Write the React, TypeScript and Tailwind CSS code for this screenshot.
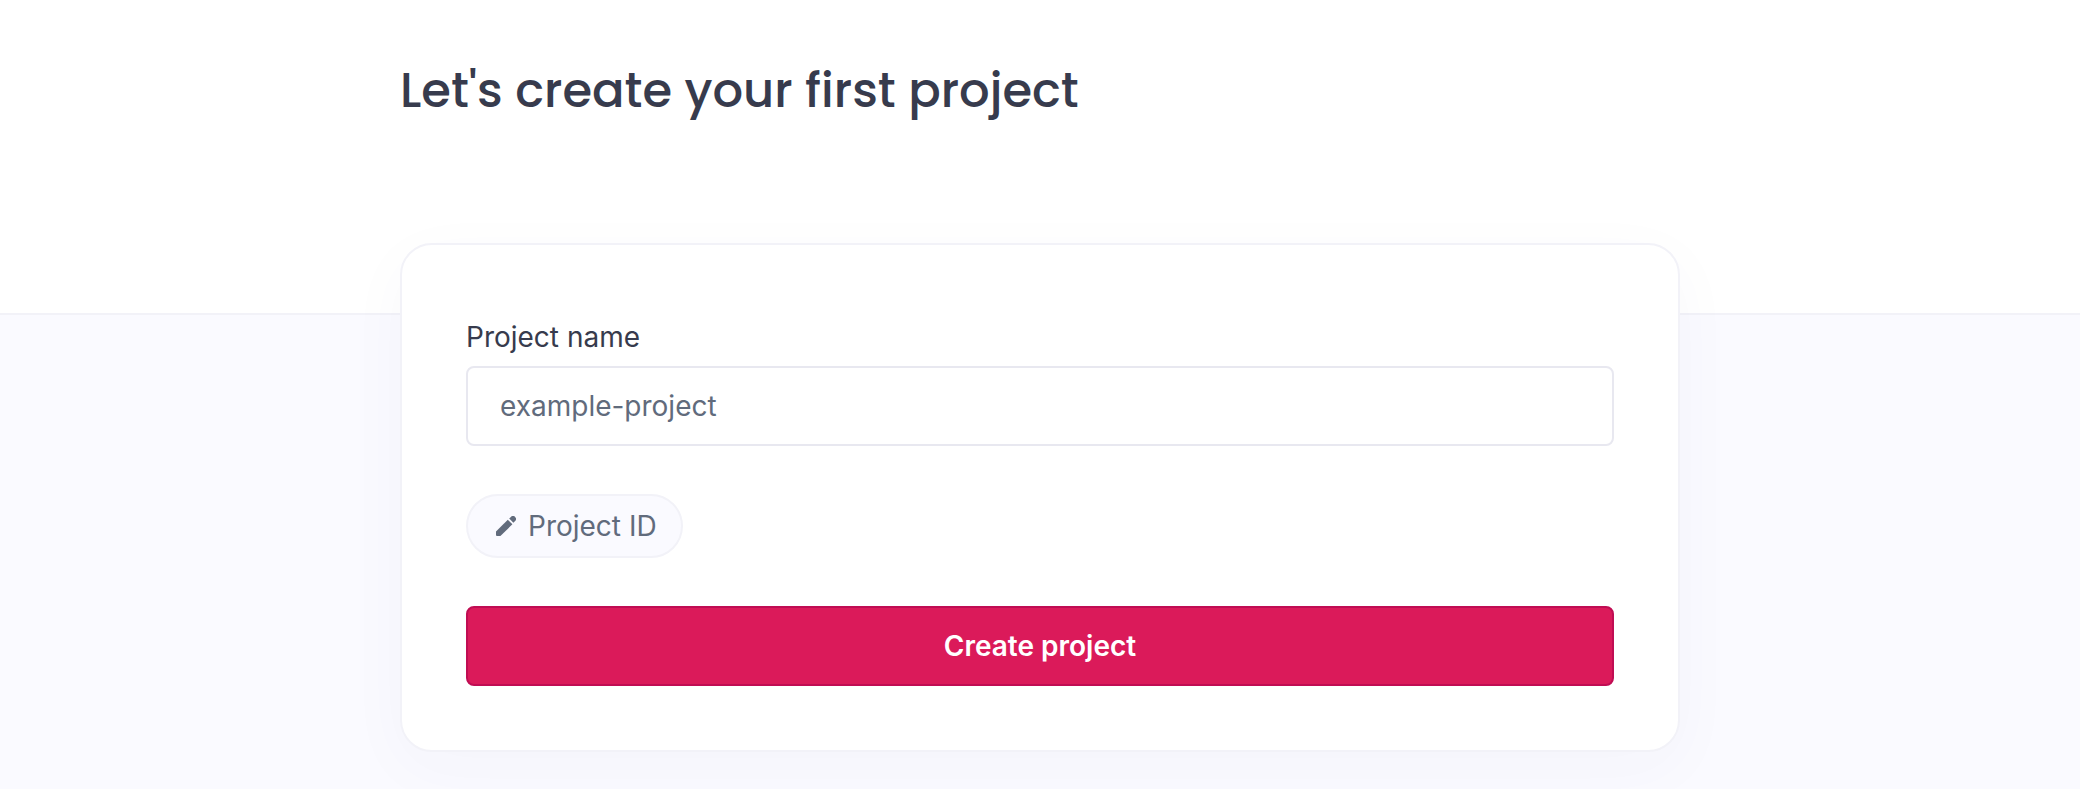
function PencilIcon() {
  return (
    <svg viewBox="0 0 20 20" className="size-5 shrink-0" fill="#616b7c" aria-hidden="true">
      <path d="M0 15.6V19a1 1 0 0 0 1 1h3.4L16.4 8.3l-4.6-4.6z" />
      <path d="M13.2 2.6l1.7-1.7a3 3 0 0 1 4.2 0 3 3 0 0 1 0 4.2l-1.7 1.7z" />
    </svg>
  );
}

export default function App() {
  return (
    <div className="h-[789px] overflow-hidden bg-[#fafaff] font-['Inter',sans-serif] text-[28px] leading-[42px] text-[#373b4d]">
      <header className="h-[315px] border-b-2 border-[#f2f2f8] bg-white">
        <div className="mx-auto w-[1280px] pt-[55px]">
          <h1 className="text-[48px] font-medium leading-[72px] whitespace-nowrap [font-family:Poppins,Inter,sans-serif]">
            Let's create your first project
          </h1>
        </div>
      </header>
      <main className="relative mx-auto -mt-[72px] h-[509px] w-[1280px] rounded-[32px] border-2 border-[#f2f2f8] bg-white px-16 shadow-[0_16px_64px_rgba(55,59,125,0.03)]">
        <label htmlFor="name" className="mt-[71px] block h-[50px]">
          Project name
        </label>
        <input
          id="name"
          placeholder="example-project"
          className="block h-20 w-full rounded-lg border-2 border-[#e8e8f0] bg-white px-8 outline-none placeholder:text-[#616b7c]"
        />
        <button className="mt-12 flex h-16 w-[217px] items-center gap-3 rounded-full border-2 border-[#f2f2f8] bg-[#fafaff] pl-7 text-[#616b7c]">
          <PencilIcon />
          <span className="whitespace-nowrap">Project ID</span>
        </button>
        <button className="mt-12 block h-20 w-full rounded-lg border-2 border-[#c00d53] bg-[#db1a5a] font-semibold text-white">
          Create project
        </button>
      </main>
    </div>
  );
}
